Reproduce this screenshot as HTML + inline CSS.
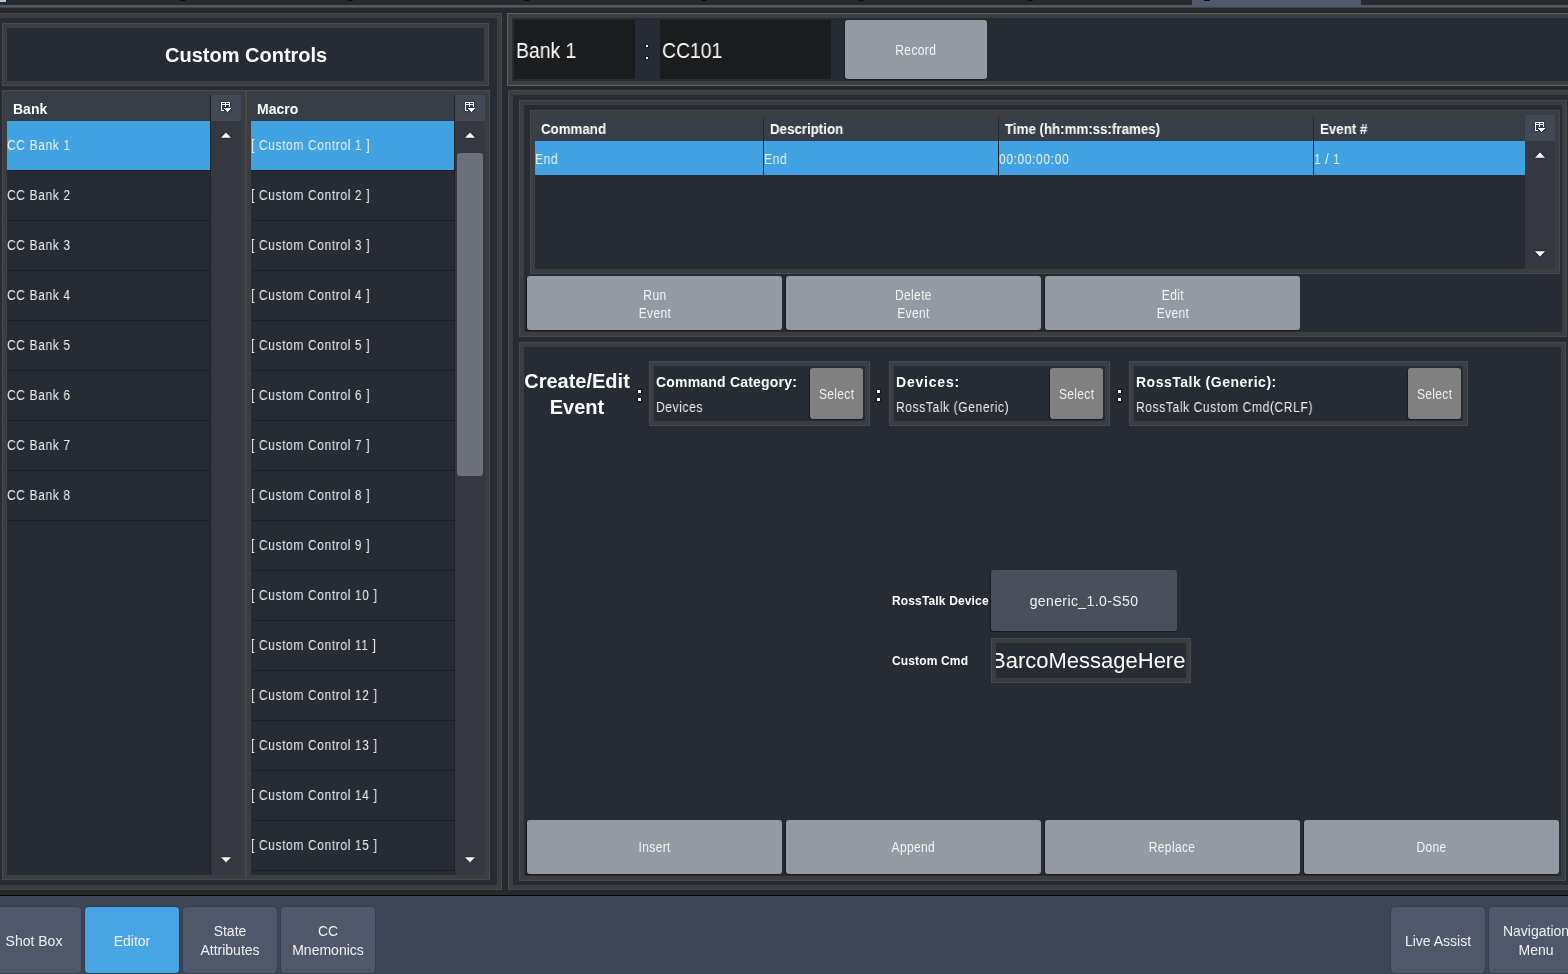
<!DOCTYPE html>
<html><head><meta charset="utf-8"><style>
html,body{margin:0;padding:0;}
body{width:1568px;height:974px;overflow:hidden;position:relative;background:#26292d;font-family:"Liberation Sans",sans-serif;}
body div, body svg{position:absolute;box-sizing:border-box;}
.t{white-space:nowrap;line-height:1.15;will-change:transform;}
</style></head><body>
<div style="left:0px;top:0px;width:1568px;height:5px;background:#262a2e;"></div>
<div style="left:1192px;top:0px;width:169px;height:5px;background:#4f596b;"></div>
<div style="left:0px;top:0px;width:6px;height:2px;background:#a9d0d0;"></div>
<div style="left:180px;top:0px;width:6px;height:1px;background:#0a0a0a;border-radius:0 0 3px 3px"></div>
<div style="left:347px;top:0px;width:6px;height:1px;background:#0a0a0a;border-radius:0 0 3px 3px"></div>
<div style="left:524px;top:0px;width:6px;height:1px;background:#0a0a0a;border-radius:0 0 3px 3px"></div>
<div style="left:701px;top:0px;width:6px;height:1px;background:#0a0a0a;border-radius:0 0 3px 3px"></div>
<div style="left:858px;top:0px;width:6px;height:1px;background:#0a0a0a;border-radius:0 0 3px 3px"></div>
<div style="left:1027px;top:0px;width:6px;height:1px;background:#0a0a0a;border-radius:0 0 3px 3px"></div>
<div style="left:1204px;top:0px;width:6px;height:1px;background:#0a0a0a;border-radius:0 0 3px 3px"></div>
<div style="left:0px;top:5px;width:1568px;height:2px;background:#4f586a;"></div>
<div style="left:0px;top:7px;width:1568px;height:1px;background:#454440;"></div>
<div style="left:-5px;top:13px;width:507px;height:877px;background:#272b33;border:1px solid #46494e;box-shadow:inset 0 0 0 4px #3b3d41"></div>
<div style="left:2px;top:23px;width:487px;height:63px;background:#272b33;border:1px solid #46494e;box-shadow:inset 0 0 0 4px #3b3d41"></div>
<div class="t" style="left:165px;top:44px;font-size:20px;font-weight:bold;color:#ffffff;">Custom Controls</div>
<div style="left:2px;top:90px;width:244px;height:790px;background:#272b33;border:1px solid #46494e;box-shadow:inset 0 0 0 4px #3b3d41"></div>
<div style="left:7px;top:95px;width:203px;height:26px;background:#383e48;"></div>
<div style="left:210px;top:95px;width:1px;height:780px;background:#1e2126;"></div>
<div style="left:211px;top:95px;width:30px;height:26px;background:#424854;"></div>
<div style="left:211px;top:121px;width:30px;height:754px;background:#353840;"></div>
<div class="t" style="left:13px;top:101px;font-size:14px;font-weight:bold;color:#ffffff;">Bank</div>
<svg style="position:absolute;left:221px;top:102px;filter:drop-shadow(0 0 1px rgba(20,22,27,0.9))" width="12" height="11" viewBox="0 0 12 11" shape-rendering="crispEdges"><path d="M0 0h1v1h-1zM0 2h1v1h-1zM1 0h1v1h-1zM1 2h1v1h-1zM2 0h1v1h-1zM2 2h1v1h-1zM3 0h1v1h-1zM3 2h1v1h-1zM4 0h1v1h-1zM4 2h1v1h-1zM5 0h1v1h-1zM5 2h1v1h-1zM6 0h1v1h-1zM6 2h1v1h-1zM7 0h1v1h-1zM7 2h1v1h-1zM8 0h1v1h-1zM8 2h1v1h-1zM0 1h1v1h-1zM4 1h1v1h-1zM8 1h1v1h-1zM0 3h1v1h-1zM4 3h1v1h-1zM8 3h1v1h-1zM0 4h1v1h-1zM4 4h1v1h-1zM8 4h1v1h-1zM0 5h1v1h-1zM0 6h1v1h-1zM0 7h1v1h-1zM0 8h1v1h-1zM1 8h1v1h-1zM2 8h1v1h-1zM3 6h1v1h-1zM4 6h1v1h-1zM5 6h1v1h-1zM6 6h1v1h-1zM7 6h1v1h-1zM8 6h1v1h-1zM9 6h1v1h-1zM4 7h1v1h-1zM5 7h1v1h-1zM6 7h1v1h-1zM7 7h1v1h-1zM8 7h1v1h-1zM5 8h1v1h-1zM6 8h1v1h-1zM7 8h1v1h-1zM6 9h1v1h-1z" fill="#ffffff"/></svg>
<svg style="position:absolute;left:221px;top:132px;filter:drop-shadow(0 0 1px rgba(20,22,27,0.9))" width="10" height="6" viewBox="0 0 10 6"><path d="M0 5.8 L5 0.6 L10 5.8 Z" fill="#ffffff"/></svg>
<svg style="position:absolute;left:221px;top:857px;filter:drop-shadow(0 0 1px rgba(20,22,27,0.9))" width="10" height="6" viewBox="0 0 10 6"><path d="M0 0.2 L5 5.4 L10 0.2 Z" fill="#ffffff"/></svg>
<div style="left:7px;top:121px;width:203px;height:49px;background:#40a2e0;"></div>
<div style="left:7px;top:170px;width:203px;height:1px;background:#1c1f23;"></div>
<div class="t" style="left:7px;top:137px;font-size:14px;font-weight:normal;color:#f0f0f0;transform:scaleX(0.86);transform-origin:0 0;letter-spacing:0.7px">CC Bank 1</div>
<div style="left:7px;top:220px;width:203px;height:1px;background:#1c1f23;"></div>
<div class="t" style="left:7px;top:187px;font-size:14px;font-weight:normal;color:#f0f0f0;transform:scaleX(0.86);transform-origin:0 0;letter-spacing:0.7px">CC Bank 2</div>
<div style="left:7px;top:270px;width:203px;height:1px;background:#1c1f23;"></div>
<div class="t" style="left:7px;top:237px;font-size:14px;font-weight:normal;color:#f0f0f0;transform:scaleX(0.86);transform-origin:0 0;letter-spacing:0.7px">CC Bank 3</div>
<div style="left:7px;top:320px;width:203px;height:1px;background:#1c1f23;"></div>
<div class="t" style="left:7px;top:287px;font-size:14px;font-weight:normal;color:#f0f0f0;transform:scaleX(0.86);transform-origin:0 0;letter-spacing:0.7px">CC Bank 4</div>
<div style="left:7px;top:370px;width:203px;height:1px;background:#1c1f23;"></div>
<div class="t" style="left:7px;top:337px;font-size:14px;font-weight:normal;color:#f0f0f0;transform:scaleX(0.86);transform-origin:0 0;letter-spacing:0.7px">CC Bank 5</div>
<div style="left:7px;top:420px;width:203px;height:1px;background:#1c1f23;"></div>
<div class="t" style="left:7px;top:387px;font-size:14px;font-weight:normal;color:#f0f0f0;transform:scaleX(0.86);transform-origin:0 0;letter-spacing:0.7px">CC Bank 6</div>
<div style="left:7px;top:470px;width:203px;height:1px;background:#1c1f23;"></div>
<div class="t" style="left:7px;top:437px;font-size:14px;font-weight:normal;color:#f0f0f0;transform:scaleX(0.86);transform-origin:0 0;letter-spacing:0.7px">CC Bank 7</div>
<div style="left:7px;top:520px;width:203px;height:1px;background:#1c1f23;"></div>
<div class="t" style="left:7px;top:487px;font-size:14px;font-weight:normal;color:#f0f0f0;transform:scaleX(0.86);transform-origin:0 0;letter-spacing:0.7px">CC Bank 8</div>
<div style="left:246px;top:90px;width:244px;height:790px;background:#272b33;border:1px solid #46494e;box-shadow:inset 0 0 0 4px #3b3d41"></div>
<div style="left:251px;top:95px;width:203px;height:26px;background:#383e48;"></div>
<div style="left:454px;top:95px;width:1px;height:780px;background:#1e2126;"></div>
<div style="left:455px;top:95px;width:30px;height:26px;background:#424854;"></div>
<div style="left:455px;top:121px;width:30px;height:754px;background:#353840;"></div>
<div class="t" style="left:257px;top:101px;font-size:14px;font-weight:bold;color:#ffffff;">Macro</div>
<svg style="position:absolute;left:465px;top:102px;filter:drop-shadow(0 0 1px rgba(20,22,27,0.9))" width="12" height="11" viewBox="0 0 12 11" shape-rendering="crispEdges"><path d="M0 0h1v1h-1zM0 2h1v1h-1zM1 0h1v1h-1zM1 2h1v1h-1zM2 0h1v1h-1zM2 2h1v1h-1zM3 0h1v1h-1zM3 2h1v1h-1zM4 0h1v1h-1zM4 2h1v1h-1zM5 0h1v1h-1zM5 2h1v1h-1zM6 0h1v1h-1zM6 2h1v1h-1zM7 0h1v1h-1zM7 2h1v1h-1zM8 0h1v1h-1zM8 2h1v1h-1zM0 1h1v1h-1zM4 1h1v1h-1zM8 1h1v1h-1zM0 3h1v1h-1zM4 3h1v1h-1zM8 3h1v1h-1zM0 4h1v1h-1zM4 4h1v1h-1zM8 4h1v1h-1zM0 5h1v1h-1zM0 6h1v1h-1zM0 7h1v1h-1zM0 8h1v1h-1zM1 8h1v1h-1zM2 8h1v1h-1zM3 6h1v1h-1zM4 6h1v1h-1zM5 6h1v1h-1zM6 6h1v1h-1zM7 6h1v1h-1zM8 6h1v1h-1zM9 6h1v1h-1zM4 7h1v1h-1zM5 7h1v1h-1zM6 7h1v1h-1zM7 7h1v1h-1zM8 7h1v1h-1zM5 8h1v1h-1zM6 8h1v1h-1zM7 8h1v1h-1zM6 9h1v1h-1z" fill="#ffffff"/></svg>
<svg style="position:absolute;left:465px;top:132px;filter:drop-shadow(0 0 1px rgba(20,22,27,0.9))" width="10" height="6" viewBox="0 0 10 6"><path d="M0 5.8 L5 0.6 L10 5.8 Z" fill="#ffffff"/></svg>
<svg style="position:absolute;left:465px;top:857px;filter:drop-shadow(0 0 1px rgba(20,22,27,0.9))" width="10" height="6" viewBox="0 0 10 6"><path d="M0 0.2 L5 5.4 L10 0.2 Z" fill="#ffffff"/></svg>
<div style="left:457px;top:153px;width:26px;height:323px;background:#6b707b;border-radius:3px"></div>
<div style="left:251px;top:121px;width:203px;height:49px;background:#40a2e0;"></div>
<div style="left:251px;top:170px;width:203px;height:1px;background:#1c1f23;"></div>
<div class="t" style="left:251px;top:137px;font-size:14px;font-weight:normal;color:#f0f0f0;transform:scaleX(0.86);transform-origin:0 0;letter-spacing:0.7px">[ Custom Control 1 ]</div>
<div style="left:251px;top:220px;width:203px;height:1px;background:#1c1f23;"></div>
<div class="t" style="left:251px;top:187px;font-size:14px;font-weight:normal;color:#f0f0f0;transform:scaleX(0.86);transform-origin:0 0;letter-spacing:0.7px">[ Custom Control 2 ]</div>
<div style="left:251px;top:270px;width:203px;height:1px;background:#1c1f23;"></div>
<div class="t" style="left:251px;top:237px;font-size:14px;font-weight:normal;color:#f0f0f0;transform:scaleX(0.86);transform-origin:0 0;letter-spacing:0.7px">[ Custom Control 3 ]</div>
<div style="left:251px;top:320px;width:203px;height:1px;background:#1c1f23;"></div>
<div class="t" style="left:251px;top:287px;font-size:14px;font-weight:normal;color:#f0f0f0;transform:scaleX(0.86);transform-origin:0 0;letter-spacing:0.7px">[ Custom Control 4 ]</div>
<div style="left:251px;top:370px;width:203px;height:1px;background:#1c1f23;"></div>
<div class="t" style="left:251px;top:337px;font-size:14px;font-weight:normal;color:#f0f0f0;transform:scaleX(0.86);transform-origin:0 0;letter-spacing:0.7px">[ Custom Control 5 ]</div>
<div style="left:251px;top:420px;width:203px;height:1px;background:#1c1f23;"></div>
<div class="t" style="left:251px;top:387px;font-size:14px;font-weight:normal;color:#f0f0f0;transform:scaleX(0.86);transform-origin:0 0;letter-spacing:0.7px">[ Custom Control 6 ]</div>
<div style="left:251px;top:470px;width:203px;height:1px;background:#1c1f23;"></div>
<div class="t" style="left:251px;top:437px;font-size:14px;font-weight:normal;color:#f0f0f0;transform:scaleX(0.86);transform-origin:0 0;letter-spacing:0.7px">[ Custom Control 7 ]</div>
<div style="left:251px;top:520px;width:203px;height:1px;background:#1c1f23;"></div>
<div class="t" style="left:251px;top:487px;font-size:14px;font-weight:normal;color:#f0f0f0;transform:scaleX(0.86);transform-origin:0 0;letter-spacing:0.7px">[ Custom Control 8 ]</div>
<div style="left:251px;top:570px;width:203px;height:1px;background:#1c1f23;"></div>
<div class="t" style="left:251px;top:537px;font-size:14px;font-weight:normal;color:#f0f0f0;transform:scaleX(0.86);transform-origin:0 0;letter-spacing:0.7px">[ Custom Control 9 ]</div>
<div style="left:251px;top:620px;width:203px;height:1px;background:#1c1f23;"></div>
<div class="t" style="left:251px;top:587px;font-size:14px;font-weight:normal;color:#f0f0f0;transform:scaleX(0.86);transform-origin:0 0;letter-spacing:0.7px">[ Custom Control 10 ]</div>
<div style="left:251px;top:670px;width:203px;height:1px;background:#1c1f23;"></div>
<div class="t" style="left:251px;top:637px;font-size:14px;font-weight:normal;color:#f0f0f0;transform:scaleX(0.86);transform-origin:0 0;letter-spacing:0.7px">[ Custom Control 11 ]</div>
<div style="left:251px;top:720px;width:203px;height:1px;background:#1c1f23;"></div>
<div class="t" style="left:251px;top:687px;font-size:14px;font-weight:normal;color:#f0f0f0;transform:scaleX(0.86);transform-origin:0 0;letter-spacing:0.7px">[ Custom Control 12 ]</div>
<div style="left:251px;top:770px;width:203px;height:1px;background:#1c1f23;"></div>
<div class="t" style="left:251px;top:737px;font-size:14px;font-weight:normal;color:#f0f0f0;transform:scaleX(0.86);transform-origin:0 0;letter-spacing:0.7px">[ Custom Control 13 ]</div>
<div style="left:251px;top:820px;width:203px;height:1px;background:#1c1f23;"></div>
<div class="t" style="left:251px;top:787px;font-size:14px;font-weight:normal;color:#f0f0f0;transform:scaleX(0.86);transform-origin:0 0;letter-spacing:0.7px">[ Custom Control 14 ]</div>
<div style="left:251px;top:870px;width:203px;height:1px;background:#1c1f23;"></div>
<div class="t" style="left:251px;top:837px;font-size:14px;font-weight:normal;color:#f0f0f0;transform:scaleX(0.86);transform-origin:0 0;letter-spacing:0.7px">[ Custom Control 15 ]</div>
<div style="left:507px;top:13px;width:1068px;height:73px;background:#272b33;border:1px solid #5e6165;box-shadow:inset 0 0 0 4px #3b3d41"></div>
<div style="left:514px;top:20px;width:121px;height:59px;background:#1b1c1e;"></div>
<div style="left:660px;top:20px;width:171px;height:59px;background:#1b1c1e;"></div>
<div class="t" style="left:516px;top:38px;font-size:22px;font-weight:normal;color:#ffffff;transform:scaleX(0.88);transform-origin:0 0">Bank 1</div>
<div style="left:646px;top:45px;width:2px;height:2px;background:#ffffff;box-shadow:0 0 1px 1px rgba(10,12,15,0.6)"></div>
<div style="left:646px;top:57px;width:2px;height:2px;background:#ffffff;box-shadow:0 0 1px 1px rgba(10,12,15,0.6)"></div>
<div class="t" style="left:662px;top:38px;font-size:22px;font-weight:normal;color:#ffffff;transform:scaleX(0.88);transform-origin:0 0">CC101</div>
<div style="left:845px;top:20px;width:142px;height:59px;background:#949aa4;border-radius:3px;box-shadow:-1px 1px 1px rgba(0,0,0,0.35);display:flex;align-items:center;justify-content:center;text-align:center;font-size:14px;line-height:18px;color:#f4f4f4;padding-top:0px;will-change:transform"><span style="display:inline-block;transform:scaleX(0.86);letter-spacing:0.4px">Record</span></div>
<div style="left:508px;top:90px;width:1067px;height:800px;background:#272b33;border:1px solid #46494e;box-shadow:inset 0 0 0 4px #3b3d41"></div>
<div style="left:519px;top:100px;width:1048px;height:237px;background:#272b33;border:1px solid #46494e;box-shadow:inset 0 0 0 4px #3b3d41"></div>
<div style="left:530px;top:110px;width:1030px;height:164px;background:#272b33;border:1px solid #46494e;box-shadow:inset 0 0 0 4px #3b3d41"></div>
<div style="left:535px;top:115px;width:990px;height:26px;background:#383e48;"></div>
<div style="left:1525px;top:115px;width:30px;height:26px;background:#424854;"></div>
<div style="left:1525px;top:141px;width:30px;height:128px;background:#353840;"></div>
<svg style="position:absolute;left:1535px;top:122px;filter:drop-shadow(0 0 1px rgba(20,22,27,0.9))" width="12" height="11" viewBox="0 0 12 11" shape-rendering="crispEdges"><path d="M0 0h1v1h-1zM0 2h1v1h-1zM1 0h1v1h-1zM1 2h1v1h-1zM2 0h1v1h-1zM2 2h1v1h-1zM3 0h1v1h-1zM3 2h1v1h-1zM4 0h1v1h-1zM4 2h1v1h-1zM5 0h1v1h-1zM5 2h1v1h-1zM6 0h1v1h-1zM6 2h1v1h-1zM7 0h1v1h-1zM7 2h1v1h-1zM8 0h1v1h-1zM8 2h1v1h-1zM0 1h1v1h-1zM4 1h1v1h-1zM8 1h1v1h-1zM0 3h1v1h-1zM4 3h1v1h-1zM8 3h1v1h-1zM0 4h1v1h-1zM4 4h1v1h-1zM8 4h1v1h-1zM0 5h1v1h-1zM0 6h1v1h-1zM0 7h1v1h-1zM0 8h1v1h-1zM1 8h1v1h-1zM2 8h1v1h-1zM3 6h1v1h-1zM4 6h1v1h-1zM5 6h1v1h-1zM6 6h1v1h-1zM7 6h1v1h-1zM8 6h1v1h-1zM9 6h1v1h-1zM4 7h1v1h-1zM5 7h1v1h-1zM6 7h1v1h-1zM7 7h1v1h-1zM8 7h1v1h-1zM5 8h1v1h-1zM6 8h1v1h-1zM7 8h1v1h-1zM6 9h1v1h-1z" fill="#ffffff"/></svg>
<svg style="position:absolute;left:1535px;top:152px;filter:drop-shadow(0 0 1px rgba(20,22,27,0.9))" width="10" height="6" viewBox="0 0 10 6"><path d="M0 5.8 L5 0.6 L10 5.8 Z" fill="#ffffff"/></svg>
<svg style="position:absolute;left:1535px;top:251px;filter:drop-shadow(0 0 1px rgba(20,22,27,0.9))" width="10" height="6" viewBox="0 0 10 6"><path d="M0 0.2 L5 5.4 L10 0.2 Z" fill="#ffffff"/></svg>
<div style="left:535px;top:141px;width:990px;height:34px;background:#40a2e0;"></div>
<div style="left:763px;top:117px;width:1px;height:58px;background:#23262b;"></div>
<div style="left:998px;top:117px;width:1px;height:58px;background:#23262b;"></div>
<div style="left:1313px;top:117px;width:1px;height:58px;background:#23262b;"></div>
<div class="t" style="left:541px;top:121px;font-size:14px;font-weight:bold;color:#ffffff;transform:scaleX(0.95);transform-origin:0 0">Command</div>
<div class="t" style="left:770px;top:121px;font-size:14px;font-weight:bold;color:#ffffff;transform:scaleX(0.95);transform-origin:0 0">Description</div>
<div class="t" style="left:1005px;top:121px;font-size:14px;font-weight:bold;color:#ffffff;transform:scaleX(0.95);transform-origin:0 0">Time (hh:mm:ss:frames)</div>
<div class="t" style="left:1320px;top:121px;font-size:14px;font-weight:bold;color:#ffffff;transform:scaleX(0.95);transform-origin:0 0">Event #</div>
<div class="t" style="left:535px;top:151px;font-size:14px;font-weight:normal;color:#f0f0f0;transform:scaleX(0.86);transform-origin:0 0;letter-spacing:0.7px">End</div>
<div class="t" style="left:764px;top:151px;font-size:14px;font-weight:normal;color:#f0f0f0;transform:scaleX(0.86);transform-origin:0 0;letter-spacing:0.7px">End</div>
<div class="t" style="left:999px;top:151px;font-size:14px;font-weight:normal;color:#f0f0f0;transform:scaleX(0.86);transform-origin:0 0;letter-spacing:0.7px">00:00:00:00</div>
<div class="t" style="left:1314px;top:151px;font-size:14px;font-weight:normal;color:#f0f0f0;transform:scaleX(0.86);transform-origin:0 0;letter-spacing:0.7px">1 / 1</div>
<div style="left:527px;top:276px;width:255px;height:54px;background:#949aa4;border-radius:3px;box-shadow:-1px 1px 1px rgba(0,0,0,0.35);display:flex;align-items:center;justify-content:center;text-align:center;font-size:14px;line-height:18px;color:#f4f4f4;padding-top:1px;will-change:transform"><span style="display:inline-block;transform:scaleX(0.86);letter-spacing:0.4px">Run<br>Event</span></div>
<div style="left:786px;top:276px;width:255px;height:54px;background:#949aa4;border-radius:3px;box-shadow:-1px 1px 1px rgba(0,0,0,0.35);display:flex;align-items:center;justify-content:center;text-align:center;font-size:14px;line-height:18px;color:#f4f4f4;padding-top:1px;will-change:transform"><span style="display:inline-block;transform:scaleX(0.86);letter-spacing:0.4px">Delete<br>Event</span></div>
<div style="left:1045px;top:276px;width:255px;height:54px;background:#949aa4;border-radius:3px;box-shadow:-1px 1px 1px rgba(0,0,0,0.35);display:flex;align-items:center;justify-content:center;text-align:center;font-size:14px;line-height:18px;color:#f4f4f4;padding-top:1px;will-change:transform"><span style="display:inline-block;transform:scaleX(0.86);letter-spacing:0.4px">Edit<br>Event</span></div>
<div style="left:519px;top:342px;width:1047px;height:539px;background:#272b33;border:1px solid #46494e;box-shadow:inset 0 0 0 4px #3b3d41"></div>
<div class="t" style="left:520px;top:368px;width:114px;text-align:center;font-size:20px;font-weight:bold;line-height:26px;color:#ffffff">Create/Edit<br>Event</div>
<div style="left:638px;top:390px;width:3px;height:3px;background:#ffffff;box-shadow:0 0 1px 1px rgba(10,12,15,0.6)"></div>
<div style="left:638px;top:398px;width:3px;height:3px;background:#ffffff;box-shadow:0 0 1px 1px rgba(10,12,15,0.6)"></div>
<div style="left:877px;top:390px;width:3px;height:3px;background:#ffffff;box-shadow:0 0 1px 1px rgba(10,12,15,0.6)"></div>
<div style="left:877px;top:398px;width:3px;height:3px;background:#ffffff;box-shadow:0 0 1px 1px rgba(10,12,15,0.6)"></div>
<div style="left:1118px;top:390px;width:3px;height:3px;background:#ffffff;box-shadow:0 0 1px 1px rgba(10,12,15,0.6)"></div>
<div style="left:1118px;top:398px;width:3px;height:3px;background:#ffffff;box-shadow:0 0 1px 1px rgba(10,12,15,0.6)"></div>
<div style="left:649px;top:361px;width:221px;height:65px;background:#272b33;border:1px solid #46494e;box-shadow:inset 0 0 0 4px #3b3d41"></div>
<div class="t" style="left:656px;top:374px;font-size:14px;font-weight:bold;color:#ffffff;letter-spacing:0.2px">Command Category:</div>
<div class="t" style="left:656px;top:399px;font-size:14px;font-weight:normal;color:#f0f0f0;transform:scaleX(0.86);transform-origin:0 0;letter-spacing:0.7px">Devices</div>
<div style="left:810px;top:368px;width:53px;height:51px;background:#808080;border-radius:3px;box-shadow:-1px 1px 1px rgba(0,0,0,0.35);display:flex;align-items:center;justify-content:center;text-align:center;font-size:14px;line-height:18px;color:#ececec;padding-top:0px;will-change:transform"><span style="display:inline-block;transform:scaleX(0.86);letter-spacing:0.4px">Select</span></div>
<div style="left:889px;top:361px;width:221px;height:65px;background:#272b33;border:1px solid #46494e;box-shadow:inset 0 0 0 4px #3b3d41"></div>
<div class="t" style="left:896px;top:374px;font-size:14px;font-weight:bold;color:#ffffff;letter-spacing:0.8px">Devices:</div>
<div class="t" style="left:896px;top:399px;font-size:14px;font-weight:normal;color:#f0f0f0;transform:scaleX(0.86);transform-origin:0 0;letter-spacing:0.7px">RossTalk (Generic)</div>
<div style="left:1050px;top:368px;width:53px;height:51px;background:#808080;border-radius:3px;box-shadow:-1px 1px 1px rgba(0,0,0,0.35);display:flex;align-items:center;justify-content:center;text-align:center;font-size:14px;line-height:18px;color:#ececec;padding-top:0px;will-change:transform"><span style="display:inline-block;transform:scaleX(0.86);letter-spacing:0.4px">Select</span></div>
<div style="left:1129px;top:361px;width:339px;height:65px;background:#272b33;border:1px solid #46494e;box-shadow:inset 0 0 0 4px #3b3d41"></div>
<div class="t" style="left:1136px;top:374px;font-size:14px;font-weight:bold;color:#ffffff;letter-spacing:0.5px">RossTalk (Generic):</div>
<div class="t" style="left:1136px;top:399px;font-size:14px;font-weight:normal;color:#f0f0f0;transform:scaleX(0.86);transform-origin:0 0;letter-spacing:0.7px">RossTalk Custom Cmd(CRLF)</div>
<div style="left:1408px;top:368px;width:53px;height:51px;background:#808080;border-radius:3px;box-shadow:-1px 1px 1px rgba(0,0,0,0.35);display:flex;align-items:center;justify-content:center;text-align:center;font-size:14px;line-height:18px;color:#ececec;padding-top:0px;will-change:transform"><span style="display:inline-block;transform:scaleX(0.86);letter-spacing:0.4px">Select</span></div>
<div class="t" style="left:892px;top:595px;font-size:12px;font-weight:bold;color:#ffffff;letter-spacing:0.15px">RossTalk Device</div>
<div style="left:991px;top:570px;width:186px;height:61px;background:#4a505b;border-radius:3px;box-shadow:-1px 1px 1px rgba(0,0,0,0.35);display:flex;align-items:center;justify-content:center;text-align:center;font-size:14px;line-height:18px;color:#f2f2f2;padding-top:0px;will-change:transform"><span style="display:inline-block;letter-spacing:0.4px">generic_1.0-S50</span></div>
<div class="t" style="left:892px;top:655px;font-size:12px;font-weight:bold;color:#ffffff;letter-spacing:0.15px">Custom Cmd</div>
<div style="left:991px;top:638px;width:200px;height:45px;background:#272b33;border:1px solid #46494e;box-shadow:inset 0 0 0 4px #3b3d41"></div>
<div style="left:996px;top:643px;width:190px;height:35px;overflow:hidden"><div class="t" style="right:1px;top:5px;font-size:22px;color:#ffffff">BarcoMessageHere</div></div>
<div style="left:527px;top:820px;width:255px;height:54px;background:#949aa4;border-radius:3px;box-shadow:-1px 1px 1px rgba(0,0,0,0.35);display:flex;align-items:center;justify-content:center;text-align:center;font-size:14px;line-height:18px;color:#f4f4f4;padding-top:0px;will-change:transform"><span style="display:inline-block;transform:scaleX(0.86);letter-spacing:0.4px">Insert</span></div>
<div style="left:786px;top:820px;width:255px;height:54px;background:#949aa4;border-radius:3px;box-shadow:-1px 1px 1px rgba(0,0,0,0.35);display:flex;align-items:center;justify-content:center;text-align:center;font-size:14px;line-height:18px;color:#f4f4f4;padding-top:0px;will-change:transform"><span style="display:inline-block;transform:scaleX(0.86);letter-spacing:0.4px">Append</span></div>
<div style="left:1045px;top:820px;width:255px;height:54px;background:#949aa4;border-radius:3px;box-shadow:-1px 1px 1px rgba(0,0,0,0.35);display:flex;align-items:center;justify-content:center;text-align:center;font-size:14px;line-height:18px;color:#f4f4f4;padding-top:0px;will-change:transform"><span style="display:inline-block;transform:scaleX(0.86);letter-spacing:0.4px">Replace</span></div>
<div style="left:1304px;top:820px;width:255px;height:54px;background:#949aa4;border-radius:3px;box-shadow:-1px 1px 1px rgba(0,0,0,0.35);display:flex;align-items:center;justify-content:center;text-align:center;font-size:14px;line-height:18px;color:#f4f4f4;padding-top:0px;will-change:transform"><span style="display:inline-block;transform:scaleX(0.86);letter-spacing:0.4px">Done</span></div>
<div style="left:0px;top:895px;width:1568px;height:1px;background:#050607;"></div>
<div style="left:0px;top:896px;width:1568px;height:78px;background:#3c4657;"></div>
<div style="left:-13px;top:907px;width:94px;height:66px;background:#4f576a;border-radius:4px;box-shadow:0 0 0 1px #363d4c;display:flex;align-items:center;justify-content:center;text-align:center;font-size:14px;line-height:19px;color:#f0f0f0;padding-top:2px;will-change:transform">Shot Box</div>
<div style="left:85px;top:907px;width:94px;height:66px;background:#48a5e3;border-radius:4px;box-shadow:0 0 0 1px #363d4c;display:flex;align-items:center;justify-content:center;text-align:center;font-size:14px;line-height:19px;color:#f0f0f0;padding-top:2px;will-change:transform">Editor</div>
<div style="left:183px;top:907px;width:94px;height:66px;background:#4f576a;border-radius:4px;box-shadow:0 0 0 1px #363d4c;display:flex;align-items:center;justify-content:center;text-align:center;font-size:14px;line-height:19px;color:#f0f0f0;padding-top:2px;will-change:transform">State<br>Attributes</div>
<div style="left:281px;top:907px;width:94px;height:66px;background:#4f576a;border-radius:4px;box-shadow:0 0 0 1px #363d4c;display:flex;align-items:center;justify-content:center;text-align:center;font-size:14px;line-height:19px;color:#f0f0f0;padding-top:2px;will-change:transform">CC<br>Mnemonics</div>
<div style="left:1391px;top:907px;width:94px;height:66px;background:#4f576a;border-radius:4px;box-shadow:0 0 0 1px #363d4c;display:flex;align-items:center;justify-content:center;text-align:center;font-size:14px;line-height:19px;color:#f0f0f0;padding-top:2px;will-change:transform">Live Assist</div>
<div style="left:1489px;top:907px;width:94px;height:66px;background:#4f576a;border-radius:4px;box-shadow:0 0 0 1px #363d4c;display:flex;align-items:center;justify-content:center;text-align:center;font-size:14px;line-height:19px;color:#f0f0f0;padding-top:2px;will-change:transform">Navigation<br>Menu</div>
</body></html>
